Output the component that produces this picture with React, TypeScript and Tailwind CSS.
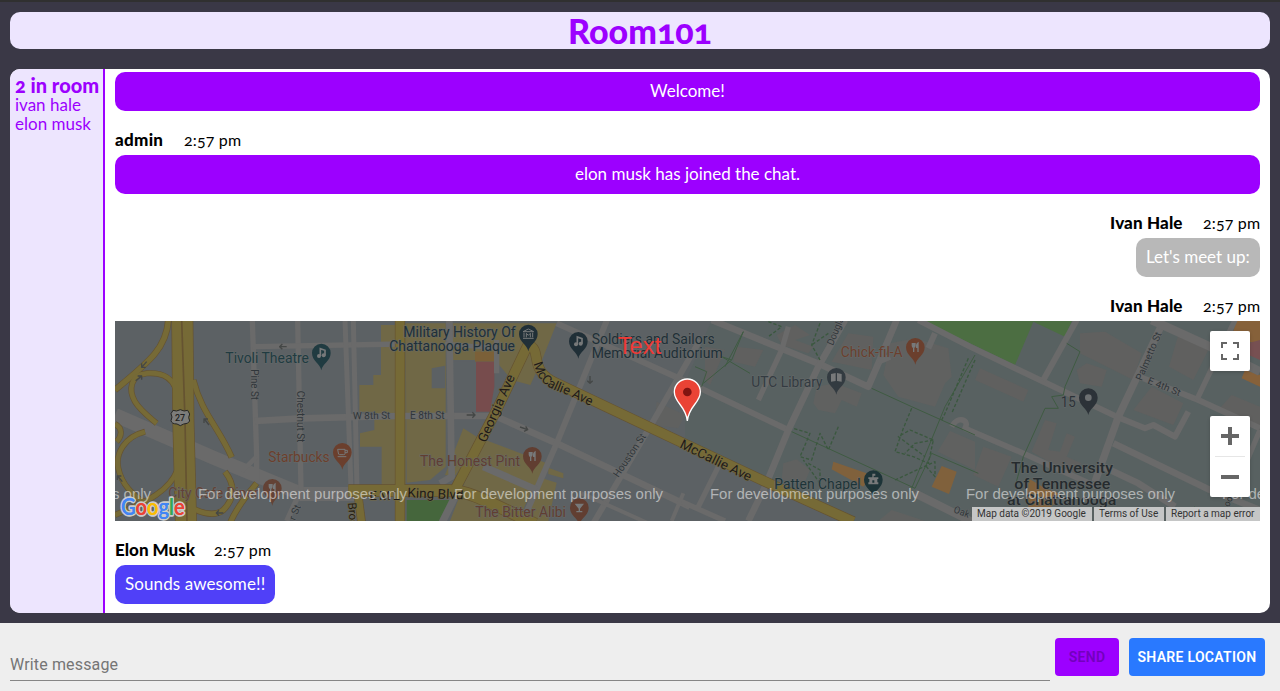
import type { ReactNode } from "react";

const GRAY = "#6a6a6a";

/* Map coordinates are three units per CSS pixel. */
const blocks: [string, string][] = [
  ["M798 15H872V500H800V380H735V340L778 330V275H733V195H775V165H798Z", "#706846"],
  ["M872 10H992V440L945 480L875 488Z", "#706846"],
  ["M950 145L990 137V205H950Z", "#5c6164"],
  ["M1013 10H1325L1285 110L1246 195L1190 180L1140 120H1013Z", "#706846"],
  ["M1013 125H1083V275H1013Z", "#5c6164"],
  ["M1080 95H1138V125H1080Z", "#7b6038"],
  ["M1083 125H1138V200L1125 275H1083Z", "#774c4d"],
  ["M1045 325L1085 350L1295 430L1255 508L1050 425L1018 470L990 465Z", "#706846"],
  ["M1085 410L1250 510L1210 603H1005L1060 460Z", "#706846"],
  ["M1300 443L1345 460V475L1300 462Z", "#706846"],
  ["M1282 475L1325 488L1300 603H1225Z", "#706846"],
  ["M875 540H1023L985 603H875Z", "#45663c"],
  ["M2420 0L2700 135L2755 5L2850 50L2872 0Z", "#4c6e42"],
  ["M2040 15L2085 45L2040 60L2095 80L2080 100L2000 75L1985 45Z", "#60605f"],
  ["M2200 40L2275 50L2270 150L2150 125Z", "#60605f"],
  ["M1865 80L1945 90L1920 140L1855 125Z", "#60605f"],
  ["M2325 70L2400 55L2500 85L2510 170L2490 190L2460 260L2350 230L2305 165Z", "#606160"],
  ["M2105 200L2160 190L2240 220L2225 260L2180 240L2160 280L2110 270L2095 250Z", "#606160"],
  ["M1625 245L1710 285L1690 325L1618 315Z", "#606160"],
  ["M1770 80L1830 90L1785 195L1770 180Z", "#60605f"],
  ["M2005 430L2045 418L2085 450L2070 485L2000 480Z", "#606160"],
  ["M2155 425L2270 465L2245 500L2150 448Z", "#80613c"],
  ["M2480 438L2525 455L2502 522L2450 500Z", "#80613c"],
  ["M2505 333L2580 365V450L2468 395Z", "#606160"],
  ["M2895 40L2970 35L3080 100L3055 180L2895 100Z", "#60605f"],
  ["M2915 130L2975 150L2960 200L2895 190L2885 150Z", "#60605f"],
  ["M2595 145L2740 210L2725 245L2580 180Z", "#60605f"],
  ["M3190 45L3280 90L3235 180L3162 140Z", "#60605f"],
  ["M3110 200L3205 250L3175 315L3055 270Z", "#60605f"],
  ["M2790 300L2825 310L2800 390L2835 395L2855 340L2880 350L2855 410L2900 430L2870 465L2750 395Z", "#60605f"],
  ["M2605 380L2690 410L2650 500L2575 465Z", "#60605f"],
  ["M3350 225L3435 260V330L3310 270Z", "#60605f"],
  ["M3365 0H3435V75L3350 50Z", "#86613a"],
  ["M3400 70L3435 60V120L3390 100Z", "#775052"],
  ["M3390 150L3435 165V200L3380 175Z", "#86613a"],
  ["M2740 475L2790 505L2830 520L2820 550L2760 603H2740Z", "#80613c"],
  ["M2330 570L2430 603H2290Z", "#606160"],
];

const grayRoads: [string, number][] = [
  ["M0 285L300 415L560 522H720", 42],
  ["M412 0L425 410V480", 16],
  ["M380 455L425 410", 14],
  ["M548 0L558 510L515 603", 16],
  ["M412 80L862 72", 16],
  ["M420 303L560 295L850 288H1140L1325 370L1725 560", 20],
  ["M690 0L708 505", 15],
  ["M715 0L726 505", 15],
  ["M1003 0L1010 470L975 490", 20],
  ["M1145 60V160", 16],
  ["M990 72L1160 85", 14],
  ["M1480 -10L1325 370L1220 610", 18],
  ["M1325 10L1725 190L2020 330", 18],
  ["M1755 60L1605 320L1435 610", 18],
  ["M1105 440L1265 510", 22],
  ["M1020 530L980 610", 22],
  ["M1400 520L1600 610M1705 520L1670 603", 12],
  ["M1790 0L2120 135L2260 200L2290 130L2345 0", 20],
  ["M2190 0L2110 140L2020 330L1950 500L1900 603", 20],
  ["M2020 20L2000 90L1930 240", 16],
  ["M1810 440L1750 560M1700 545L1830 603", 16],
  ["M2290 125L2325 110", 18],
  ["M2410 0L2565 80L3005 290L3090 325L3115 315L3180 350L3220 275", 18],
  ["M2460 40L2440 85", 18],
  ["M2510 320C2530 285 2565 300 2550 325L2725 400L2945 500", 17],
  ["M2400 520L2580 610", 24],
  ["M2885 0L2785 180", 18],
  ["M3140 15L3010 290L2940 485", 22],
  ["M3110 0L3285 80L3435 155", 26],
  ["M3060 165L3250 240L3435 325", 18],
  ["M3360 0L3245 240", 16],
  ["M2995 370L3285 510L3435 570", 20],
  ["M2965 440L3070 490L3180 560", 20],
  ["M3435 330L3380 460", 16],
];

const yellowRoads: [string, number][] = [
  ["M160 0C155 80 110 120 0 210", 16],
  ["M185 215C170 160 125 158 95 160C45 165 40 210 60 245C75 270 95 285 125 310", 14],
  ["M235 180C260 280 310 320 350 412M330 455C365 500 355 540 325 570C300 590 265 580 238 568", 15],
  ["M0 312C25 325 20 350 5 365M90 335C30 350 0 400 10 445C20 495 55 525 90 550", 14],
  ["M187 450C165 510 100 545 0 585", 14],
  ["M425 490C400 520 365 560 345 610", 15],
  ["M202 0L205 300L213 610", 62],
  ["M855 0V610", 27],
  ["M700 512H1000C1050 510 1090 530 1260 612", 34],
  ["M728 515L740 610", 22],
  ["M1240 72L1145 270L1022 505", 28],
  ["M1240 75C1285 90 1235 150 1325 190L1710 372L1940 480L2215 605", 28],
];

const paths =
  "M1885 35L1850 120L1820 110L1905 160M1850 120L1765 190M1885 35L1830 140M2270 205L2390 260L2580 345M2030 335L2400 505L2450 400L2590 460M2390 505L2490 260L2580 105M1740 140L1775 155L1760 200M2855 70L2895 95L2850 200L2845 225L2810 230L2830 265L2790 265L2725 410L2700 500M3190 603L3240 560";
const dashedPaths =
  "M1960 5L2000 20L1960 50M2115 10L2090 75L2115 120M2140 40L2090 75M2170 320L2140 390L2115 340L2090 420L2055 410L2085 340L2035 325M2080 430L2115 450V490L2065 420M2390 265L2365 325L2340 395L2395 410L2440 430L2455 360L2385 330L2350 350L2430 410M2455 360L2400 370L2370 400M2560 115L2490 280L2480 300M2580 120L2510 280M2340 480L2460 425V470L2430 435";

const streets: [string, number, number, number, number][] = [
  ["Pine St", 408, 148, 90, 92],
  ["Chestnut St", 546, 212, 90, 155],
  ["W 8th St", 714, 298, -1, 112],
  ["E 8th St", 885, 296, 0, 104],
  ["Houston St", 1510, 474, -56, 150],
  ["Dougla", 2154, 78, -68, 88],
  ["Palmetto St", 3080, 184, -67, 155],
  ["E 4th St", 3096, 190, 22, 104],
  ["Oak", 2514, 577, 20, 48],
  ["r St", 540, 603, -68, 48],
];

type Place = { lines: [string, number, number, number][]; color: string; pin?: [number, number]; glyph?: ReactNode };

const notes = (
  <g>
    <circle cx="-7" cy="9" r="6" fill="currentColor" />
    <circle cx="7" cy="7" r="6" fill="currentColor" />
    <path d="M-3 9V-13L11 -8V7" fill="none" stroke="currentColor" strokeWidth="5" />
  </g>
);
const fork = <path d="M-9 -13V-5Q-9 0 -5 0V14M-1 -13V-5Q-1 0 -5 0M-5 -13V0M8 14V-13Q3 -10 4 0H8" fill="none" stroke="currentColor" strokeWidth="4" />;
const castle = <path d="M-15 14V8H-12V-2H-15V-7H-3V-18H6V-12H1V-7H15V-2H12V8H15V14ZM-3 9H3V2H-3Z" fill="currentColor" fillRule="evenodd" />;

const places: Place[] = [
  { lines: [["Tivoli Theatre", 331, 129, 251]], color: "#203b41", pin: [619, 99], glyph: notes },
  { lines: [["Starbucks", 460, 426, 184]], color: "#6b3f2d", pin: [682, 397], glyph: <path d="M-14 -9H8V4Q8 7 4 7H-8Q-12 7 -12 2ZM8 -6H15V1H8M-14 13H12" fill="none" stroke="currentColor" strokeWidth="3" /> },
  { lines: [["City Cafe Diner", 160, 533, 270]], color: "#634235", pin: [472, 505], glyph: fork },
  { lines: [["Military History Of", 865, 51, 337], ["Chattanooga Plaque", 823, 93, 377]], color: "#202f37", pin: [1240, 42], glyph: <path d="M-16 -7L0 -15L16 -7ZM-13 -4V10M13 -4V10M-16 13H16M-6 10V-2L0 4L6 -2V10" fill="none" stroke="currentColor" strokeWidth="3" /> },
  { lines: [["Soldiers and Sailors", 1430, 71, 369], ["Memorial Auditorium", 1430, 113, 393]], color: "#202f37", pin: [1390, 64], glyph: notes },
  { lines: [["The Honest Pint", 915, 438, 300]], color: "#613e31", pin: [1252, 409], glyph: fork },
  { lines: [["The Bitter Alibi", 1081, 591, 272]], color: "#613e31", pin: [1393, 563], glyph: <path d="M-14 -12H14L2 3V10H9V14H-9V10H-2V3Z" fill="currentColor" /> },
  { lines: [["UTC Library", 1909, 201, 214]], color: "#333b41", pin: [2164, 172], glyph: <path d="M-2 11L-16 13V-10L-2 -13ZM2 11L16 13V-10L2 -13Z" fill="currentColor" /> },
  { lines: [["Chick-fil-A", 2177, 111, 186]], color: "#6b3f2d", pin: [2401, 82], glyph: fork },
  { lines: [["Patten Chapel", 1978, 507, 259]], color: "#1d3438", pin: [2275, 479], glyph: castle },
  { lines: [["15", 2837, 261, 45]], color: "#2c3238", pin: [2920, 233], glyph: <circle r="10" fill="#6d7072" /> },
];

function MapCanvas() {
  return (
    <svg viewBox="0 3 3435 600" preserveAspectRatio="none" className="block h-full w-full font-[Roboto,sans-serif]">
      <rect width="3435" height="610" fill="#5c6164" />
      <path d="M1790 0H3435V610H2215L1710 372V190Z" fill="#586161" />
      {blocks.map(([d, fill]) => <path key={d} d={d} fill={fill} />)}
      <g fill="none" strokeLinejoin="round">
        {grayRoads.map(([d, w]) => <path key={d} d={d} stroke={GRAY} strokeWidth={w} />)}
        {yellowRoads.map(([d, w]) => <path key={d} d={d} stroke="#655331" strokeWidth={w + 4} />)}
        {yellowRoads.map(([d, w]) => <path key={d} d={d} stroke="#766a36" strokeWidth={w} />)}
        <path d="M200 0L210 300L216 610" stroke="#655331" strokeWidth="5" />
        <path d={paths} stroke="#3f5b42" strokeWidth="3" />
        <path d={dashedPaths} stroke="#3b583f" strokeWidth="4" strokeDasharray="10 6" />
        <path d="M515 80H494M502 72L494 80L502 88M95 125L80 142M80 130V142H92M62 182L80 168M68 168H80V179M282 315L268 297M267 309V297H279M22 485L8 468M7 480V468H19M325 579H304M312 571L304 579L312 587M1055 285H1080M1072 277L1080 285L1072 293M1215 321L1238 329M1232 319L1238 329L1227 334M1425 168V190M1417 182L1425 190L1433 182" stroke="#444746" strokeWidth="4" />
      </g>
      <path d="M174 271Q184 276 196 269Q208 276 218 271L224 282Q218 292 224 303Q220 312 206 312L196 317L186 312Q170 312 168 302Q174 291 168 281Z" fill="#7d7d7b" stroke="#252525" strokeWidth="3" />
      <text x="180" y="304" fontSize="27" fontWeight="500" fill="#202020" textLength="30">27</text>
      <g fill="#30363a" fontSize="30">
        {streets.map(([t, x, y, r, w]) => (
          <text key={t} transform={`translate(${x} ${y}) rotate(${r})`} textLength={w} lengthAdjust="spacingAndGlyphs" stroke="#696b6b" strokeWidth="3" paintOrder="stroke">{t}</text>
        ))}
      </g>
      <defs>
        <path id="mccallie" d="M1256 130C1270 190 1300 205 1350 222L1456 271" />
      </defs>
      <g fill="#211b17" fontSize="40" stroke="#746a46" strokeWidth="3" paintOrder="stroke">
        <text fontSize="39"><textPath href="#mccallie">McCallie Ave</textPath></text>
        <text transform="translate(1112 370) rotate(-66)" textLength="218" lengthAdjust="spacingAndGlyphs">Georgia Ave</text>
        <text transform="translate(1692 382) rotate(26)" textLength="234" lengthAdjust="spacingAndGlyphs">McCallie Ave</text>
        <text x="763" y="539" textLength="92">E M L</text>
        <text transform="translate(877 532) rotate(2)" textLength="168" lengthAdjust="spacingAndGlyphs">King Blvd</text>
        <text transform="translate(699 548) rotate(86)" fontSize="35">Broad St</text>
      </g>
      {places.map((p) => (
        <g key={p.lines[0][0]}>
          {p.lines.map(([t, x, y, w]) => (
            <text key={t} x={x} y={y} textLength={w} lengthAdjust="spacingAndGlyphs" fontSize="42" fill={p.color} stroke="#666a6a" strokeWidth="3" paintOrder="stroke">{t}</text>
          ))}
          {p.pin && (
            <g transform={`translate(${p.pin[0]} ${p.pin[1]})`} className="text-[#77797a]">
              <path d="M0 52C-3 32 -28 24 -28 0A28 28 0 0 1 28 0C28 24 3 32 0 52Z" fill={p.color} />
              {p.glyph}
            </g>
          )}
        </g>
      ))}
      <g fontSize="45" fontWeight="500" fill="#252b2e" stroke="#676b6a" strokeWidth="3" paintOrder="stroke">
        <text x="2688" y="459" textLength="306" lengthAdjust="spacingAndGlyphs">The University</text>
        <text x="2698" y="507" textLength="288" lengthAdjust="spacingAndGlyphs">of Tennessee</text>
        <text x="2676" y="556" textLength="328" lengthAdjust="spacingAndGlyphs">at Chattanooga</text>
        <text transform="translate(3342 562) rotate(-68)" fontSize="27" fontWeight="400">ood</text>
      </g>
      <g fill="#fff" fillOpacity=".53" fontSize="45" className="font-['Liberation_Sans',Arial,sans-serif]">
        {[-519, 249, 1017, 1785, 2553, 3321].map((x) => (
          <text key={x} x={x} y="538" textLength="627" lengthAdjust="spacingAndGlyphs">For development purposes only</text>
        ))}
      </g>
      <text x="1508" y="102" fontSize="71" fill="#ee3a36" textLength="131" className="font-['Liberation_Sans',Arial,sans-serif]">Text</text>
      <path d="M1717 303C1713 257 1678 249 1678 216A39 39 0 0 1 1756 216C1756 249 1721 257 1717 303Z" fill="#ea4335" stroke="#fff" strokeWidth="4" />
      <circle cx="1717" cy="216" r="13" fill="#811411" />
      <g fontSize="70" fontWeight="600" strokeLinejoin="round" className="font-[Lato,sans-serif]">
        <text aria-hidden="true" x="18" y="586" textLength="191" lengthAdjust="spacingAndGlyphs" stroke="#c9cbcc" strokeWidth="10" paintOrder="stroke">
          <tspan fill="#4285f4" stroke="#c9cbcc">G</tspan><tspan fill="#ea4335">o</tspan><tspan fill="#fbbc05">o</tspan><tspan fill="#4285f4">g</tspan><tspan fill="#34a853">l</tspan><tspan fill="#ea4335">e</tspan>
        </text>
        <text x="18" y="586" textLength="191" lengthAdjust="spacingAndGlyphs">
          <tspan fill="#4285f4">G</tspan><tspan fill="#ea4335">o</tspan><tspan fill="#fbbc05">o</tspan><tspan fill="#4285f4">g</tspan><tspan fill="#34a853">l</tspan><tspan fill="#ea4335">e</tspan>
        </text>
      </g>
    </svg>
  );
}

function LocationMap() {
  return (
    <div className="relative h-[200px] w-full overflow-hidden">
      <MapCanvas />
      <button className="absolute top-[10px] right-[10px] flex size-10 items-center justify-center rounded-[2px] bg-white shadow-[0_1px_4px_-1px_rgba(0,0,0,.3)]">
        <svg viewBox="0 0 18 18" className="size-[18px]" fill="#666"><path d="M0 0H6V2H2V6H0ZM12 0H18V6H16V2H12ZM0 12H2V16H6V18H0ZM16 12H18V18H12V16H16Z" /></svg>
      </button>
      <div className="absolute top-[95px] right-[10px] flex h-[81px] w-10 flex-col items-center rounded-[2px] bg-white shadow-[0_1px_4px_-1px_rgba(0,0,0,.3)]">
        <button className="flex h-10 w-10 items-center justify-center">
          <svg viewBox="0 0 18 18" className="size-[18px]" fill="#666"><path d="M7 0H11V7H18V11H11V18H7V11H0V7H7Z" /></svg>
        </button>
        <div className="h-px w-[30px] bg-[#e6e6e6]" />
        <button className="flex h-10 w-10 items-center justify-center">
          <svg viewBox="0 0 18 18" className="size-[18px]" fill="#666"><path d="M0 7H18V11H0Z" /></svg>
        </button>
      </div>
      <div className="absolute right-0 bottom-0 flex h-[14px] gap-[2px] font-[Roboto,sans-serif] text-[10px] leading-[14px] whitespace-nowrap text-[#333]">
        <span className="w-[120px] bg-[#c5c6c6] pl-[5px]">Map data ©2019 Google</span>
        <span className="w-[70px] bg-[#c5c6c6] pl-[5px]">Terms of Use</span>
        <span className="w-[94px] bg-[#c5c6c6] pl-[5px]">Report a map error</span>
      </div>
    </div>
  );
}

function Meta({ name, nameClass, right = false }: { name: string; nameClass: string; right?: boolean }) {
  return (
    <div className={right ? "mt-5 mb-[5px] flex h-[19px] justify-end gap-5 leading-[17px]" : "mt-5 mb-[5px] flex h-[19px] gap-5 leading-[17px]"}>
      <span className={`font-black whitespace-nowrap ${nameClass}`}>{name}</span>
      <span className="w-[57px] text-base leading-[17px] tracking-[0.15px] whitespace-nowrap oldstyle-nums">2:57 pm</span>
    </div>
  );
}

export default function App() {
  return (
    <div className="flex h-[691px] w-[1280px] flex-col overflow-hidden border-t-2 border-[#303030] bg-[#3a3846] font-[Lato,sans-serif] text-[17px] text-black">
      <header className="mx-[10px] mt-[10px] flex h-[37px] shrink-0 items-center justify-center rounded-[10px] bg-[#ede5fe]">
        <h1 className="text-[34px] leading-[37px] font-black text-[#9c00ff] oldstyle-nums">Room101</h1>
      </header>
      <main className="mx-[10px] mt-5 flex h-[544px] shrink-0 overflow-hidden rounded-[10px] bg-white">
        <aside className="w-[95px] shrink-0 border-r-2 border-[#9c00ff] bg-[#ede5fe] pt-[6px] pl-[5px] leading-[19px] whitespace-nowrap text-[#9c00ff]">
          <h2 className="h-5 text-[20px] leading-5 font-black oldstyle-nums">2 in room</h2>
          <p>ivan hale</p>
          <p>elon musk</p>
        </aside>
        <section className="min-w-0 flex-1 px-[10px] pt-[3px]">
          <div className="h-[39px] rounded-[10px] bg-[#9c00ff] text-center leading-[37px] text-white">Welcome!</div>
          <Meta name="admin" nameClass="w-[49px] tracking-[0.3px]" />
          <div className="h-[39px] rounded-[10px] bg-[#9c00ff] text-center leading-[37px] text-white">elon musk has joined the chat.</div>
          <Meta name="Ivan Hale" nameClass="w-[73px] tracking-[0.15px]" right />
          <div className="ml-auto h-[39px] w-[124px] rounded-[10px] bg-[#b8b8b8] px-[10px] leading-[37px] whitespace-nowrap text-white">Let's meet up:</div>
          <Meta name="Ivan Hale" nameClass="w-[73px] tracking-[0.15px]" right />
          <LocationMap />
          <Meta name="Elon Musk" nameClass="w-[79px]" />
          <div className="h-[39px] w-[160px] rounded-[10px] bg-[#5040f8] px-[10px] leading-[37px] tracking-[0.1px] whitespace-nowrap text-white">Sounds awesome!!</div>
        </section>
      </main>
      <footer className="mt-[10px] flex h-[68px] shrink-0 bg-[#eee] pl-[10px] font-[Roboto,sans-serif]">
        <div className="mt-[26px] h-8 w-[1040px] border-b border-[#858585] text-base leading-[31px] tracking-[0.15px] text-[#757575]">Write message</div>
        <button className="mt-[15px] ml-[5px] h-[38px] w-16 rounded-[4px] bg-[#9c00ff] text-sm font-semibold tracking-[0.3px] text-[#7300bd]">SEND</button>
        <button className="mt-[15px] ml-[10px] h-[38px] w-[136px] rounded-[4px] bg-[#2979ff] text-sm font-semibold tracking-[0.3px] whitespace-nowrap text-white">SHARE LOCATION</button>
      </footer>
    </div>
  );
}
